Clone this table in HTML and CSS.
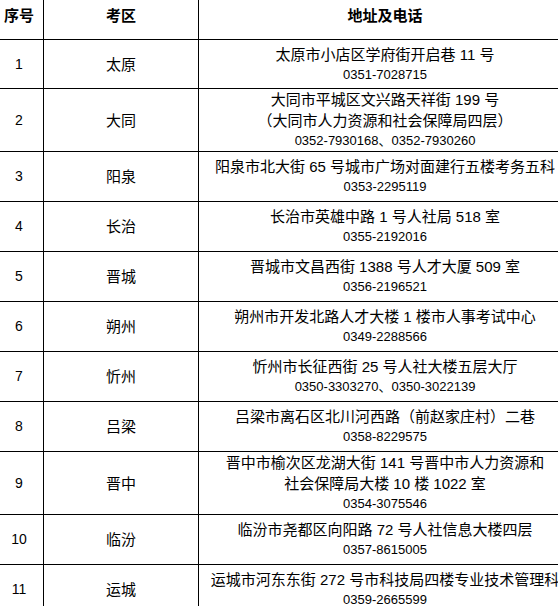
FILE: index.html
```html
<!DOCTYPE html>
<html lang="zh-CN">
<head>
<meta charset="utf-8">
<title>考区地址及电话</title>
<link rel="stylesheet" href="styles.css">
</head>
<body>
<div class="page">
<table class="sites">
<colgroup>
<col class="c-no"><col class="c-area"><col class="c-addr">
</colgroup>
<thead>
<tr><th>序号</th><th>考区</th><th>地址及电话</th></tr>
</thead>
<tbody>
<tr class="tight"><td class="num">1</td><td>太原</td><td><div>太原市小店区学府街开启巷 11 号</div><div class="tel">0351-7028715</div></td></tr>
<tr><td class="num">2</td><td>大同</td><td><div>大同市平城区文兴路天祥街 199 号</div><div>（大同市人力资源和社会保障局四层）</div><div class="tel">0352-7930168、0352-7930260</div></td></tr>
<tr><td class="num">3</td><td>阳泉</td><td><div>阳泉市北大街 65 号城市广场对面建行五楼考务五科</div><div class="tel">0353-2295119</div></td></tr>
<tr><td class="num">4</td><td>长治</td><td><div>长治市英雄中路 1 号人社局 518 室</div><div class="tel">0355-2192016</div></td></tr>
<tr><td class="num">5</td><td>晋城</td><td><div>晋城市文昌西街 1388 号人才大厦 509 室</div><div class="tel">0356-2196521</div></td></tr>
<tr><td class="num">6</td><td>朔州</td><td><div>朔州市开发北路人才大楼 1 楼市人事考试中心</div><div class="tel">0349-2288566</div></td></tr>
<tr><td class="num">7</td><td>忻州</td><td><div>忻州市长征西街 25 号人社大楼五层大厅</div><div class="tel">0350-3303270、0350-3022139</div></td></tr>
<tr><td class="num">8</td><td>吕梁</td><td><div>吕梁市离石区北川河西路（前赵家庄村）二巷</div><div class="tel">0358-8229575</div></td></tr>
<tr><td class="num">9</td><td>晋中</td><td><div>晋中市榆次区龙湖大街 141 号晋中市人力资源和</div><div>社会保障局大楼 10 楼 1022 室</div><div class="tel">0354-3075546</div></td></tr>
<tr><td class="num">10</td><td>临汾</td><td><div>临汾市尧都区向阳路 72 号人社信息大楼四层</div><div class="tel">0357-8615005</div></td></tr>
<tr><td class="num">11</td><td>运城</td><td><div>运城市河东东街 272 号市科技局四楼专业技术管理科</div><div class="tel">0359-2665599</div></td></tr>
</tbody>
</table>
</div>
</body>
</html>
```

FILE: styles.css
```css
html, body {
  margin: 0;
  padding: 0;
  background: #fff;
}

.page {
  width: 558px;
  height: 606px;
  overflow: hidden;
}

.sites {
  border-collapse: collapse;
  table-layout: fixed;
  width: 577px;
  margin: -11px 0 0 -6px;
  font-family: "Liberation Sans", "Noto Sans CJK SC", sans-serif;
  font-size: 15px;
  color: #000;
}

.c-no { width: 49px; }
.c-area { width: 155px; }
.c-addr { width: 373px; }

.sites th,
.sites td {
  border: 1px solid #000;
  padding: 0;
  height: 49px;
  text-align: center;
  vertical-align: middle;
  line-height: 21px;
  white-space: nowrap;
}

.sites .tight td {
  height: 48px;
}

.sites th {
  font-family: "Noto Sans CJK SC", sans-serif;
  font-weight: 700;
  font-size: 15px;
}

.sites td.num {
  font-size: 14px;
}

.tel {
  font-size: 13px;
  line-height: 20px;
}
```
